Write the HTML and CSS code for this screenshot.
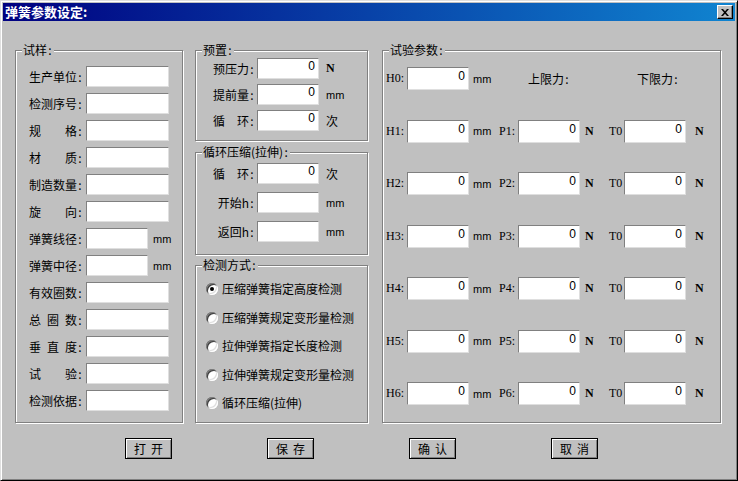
FILE: index.html
```html
<!DOCTYPE html>
<html>
<head>
<meta charset="utf-8">
<title>弹簧参数设定</title>
<link rel="stylesheet" href="styles.css">
</head>
<body>
<div class="window">
  <div class="titlebar">
    <span class="title">弹簧参数设定:</span>
    <div class="close"><svg width="8" height="7" viewBox="0 0 8 7"><path d="M0 0h2l2 2.2L6 0h2L5 3.5 8 7H6L4 4.8 2 7H0l3-3.5z" fill="#000"/></svg></div>
  </div>
  <div class="main">
    <div class="group g-sample">
      <div class="gtitle">试样<span class="c">:</span></div>
      <div class="row"><div class="lbl"><span>生产单位<span class="c">:</span></span></div><div class="box w83"></div></div>
      <div class="row"><div class="lbl"><span>检测序号<span class="c">:</span></span></div><div class="box w83"></div></div>
      <div class="row"><div class="lbl"><span>规</span><span>格<span class="c">:</span></span></div><div class="box w83"></div></div>
      <div class="row"><div class="lbl"><span>材</span><span>质<span class="c">:</span></span></div><div class="box w83"></div></div>
      <div class="row"><div class="lbl"><span>制造数量<span class="c">:</span></span></div><div class="box w83"></div></div>
      <div class="row"><div class="lbl"><span>旋</span><span>向<span class="c">:</span></span></div><div class="box w83"></div></div>
      <div class="row"><div class="lbl"><span>弹簧线径<span class="c">:</span></span></div><div class="box w62"></div><span class="mm unit-l">mm</span></div>
      <div class="row"><div class="lbl"><span>弹簧中径<span class="c">:</span></span></div><div class="box w62"></div><span class="mm unit-l">mm</span></div>
      <div class="row"><div class="lbl"><span>有效圈数<span class="c">:</span></span></div><div class="box w83"></div></div>
      <div class="row"><div class="lbl"><span>总</span><span>圈</span><span>数<span class="c">:</span></span></div><div class="box w83"></div></div>
      <div class="row"><div class="lbl"><span>垂</span><span>直</span><span>度<span class="c">:</span></span></div><div class="box w83"></div></div>
      <div class="row"><div class="lbl"><span>试</span><span>验<span class="c">:</span></span></div><div class="box w83"></div></div>
      <div class="row"><div class="lbl"><span>检测依据<span class="c">:</span></span></div><div class="box w83"></div></div>
    </div>

    <div class="col">
      <div class="group g-pre">
        <div class="gtitle">预置<span class="c">:</span></div>
        <div class="mrow"><div class="mlbl"><span>预压力<span class="c">:</span></span></div><div class="box w62">0</div><span class="lat unit-m nb">N</span></div>
        <div class="mrow"><div class="mlbl"><span>提前量<span class="c">:</span></span></div><div class="box w62">0</div><span class="mm unit-m">mm</span></div>
        <div class="mrow"><div class="mlbl"><span>循</span><span>环<span class="c">:</span></span></div><div class="box w62">0</div><span class="unit-m">次</span></div>
      </div>
      <div class="group g-cyc">
        <div class="gtitle">循环压缩(拉伸)<span class="c">:</span></div>
        <div class="mrow"><div class="mlbl"><span>循</span><span>环<span class="c">:</span></span></div><div class="box w62">0</div><span class="unit-m">次</span></div>
        <div class="mrow"><div class="mlbl end"><span>开始h<span class="c">:</span></span></div><div class="box w62"></div><span class="mm unit-m">mm</span></div>
        <div class="mrow"><div class="mlbl end"><span>返回h<span class="c">:</span></span></div><div class="box w62"></div><span class="mm unit-m">mm</span></div>
      </div>
      <div class="group g-det">
        <div class="gtitle">检测方式<span class="c">:</span></div>
        <div class="rrow"><span class="radio on"></span><span>压缩弹簧指定高度检测</span></div>
        <div class="rrow"><span class="radio"></span><span>压缩弹簧规定变形量检测</span></div>
        <div class="rrow"><span class="radio"></span><span>拉伸弹簧指定长度检测</span></div>
        <div class="rrow"><span class="radio"></span><span>拉伸弹簧规定变形量检测</span></div>
        <div class="rrow"><span class="radio"></span><span>循环压缩(拉伸)</span></div>
      </div>
    </div>

    <div class="group g-test">
      <div class="gtitle">试验参数<span class="c">:</span></div>
      <div class="trow"><span class="lat hl">H0:</span><div class="box tb">0</div><span class="mm u1">mm</span><span class="lim">上限力<span class="c">:</span></span><span>下限力<span class="c">:</span></span></div>
      <div class="trow"><span class="lat hl">H1:</span><div class="box tb">0</div><span class="mm u1">mm</span><span class="lat pl">P1:</span><div class="box tb">0</div><span class="lat u2 nb">N</span><span class="lat tl">T0</span><div class="box tb">0</div><span class="lat u3 nb">N</span></div>
      <div class="trow"><span class="lat hl">H2:</span><div class="box tb">0</div><span class="mm u1">mm</span><span class="lat pl">P2:</span><div class="box tb">0</div><span class="lat u2 nb">N</span><span class="lat tl">T0</span><div class="box tb">0</div><span class="lat u3 nb">N</span></div>
      <div class="trow"><span class="lat hl">H3:</span><div class="box tb">0</div><span class="mm u1">mm</span><span class="lat pl">P3:</span><div class="box tb">0</div><span class="lat u2 nb">N</span><span class="lat tl">T0</span><div class="box tb">0</div><span class="lat u3 nb">N</span></div>
      <div class="trow"><span class="lat hl">H4:</span><div class="box tb">0</div><span class="mm u1">mm</span><span class="lat pl">P4:</span><div class="box tb">0</div><span class="lat u2 nb">N</span><span class="lat tl">T0</span><div class="box tb">0</div><span class="lat u3 nb">N</span></div>
      <div class="trow"><span class="lat hl">H5:</span><div class="box tb">0</div><span class="mm u1">mm</span><span class="lat pl">P5:</span><div class="box tb">0</div><span class="lat u2 nb">N</span><span class="lat tl">T0</span><div class="box tb">0</div><span class="lat u3 nb">N</span></div>
      <div class="trow"><span class="lat hl">H6:</span><div class="box tb">0</div><span class="mm u1">mm</span><span class="lat pl">P6:</span><div class="box tb">0</div><span class="lat u2 nb">N</span><span class="lat tl">T0</span><div class="box tb">0</div><span class="lat u3 nb">N</span></div>
    </div>
  </div>

  <div class="buttons">
    <div class="btn"><span>打</span><span>开</span></div>
    <div class="btn"><span>保</span><span>存</span></div>
    <div class="btn"><span>确</span><span>认</span></div>
    <div class="btn"><span>取</span><span>消</span></div>
  </div>
</div>
</body>
</html>
```
FILE: styles.css
```css
body {
  margin: 0;
  background: #c0c0c0;
  font-family: "Noto Sans CJK SC", "Noto Sans CJK JP", sans-serif;
  font-size: 12px;
  color: #000;
}

.window {
  width: 738px;
  height: 481px;
  box-sizing: border-box;
  border: 1px solid;
  border-color: #dfdfdf #000 #000 #dfdfdf;
  box-shadow: inset 1px 1px 0 #fff, inset -1px -1px 0 #808080;
  padding: 2px;
  background: #c0c0c0;
}

.titlebar {
  height: 18px;
  background: linear-gradient(to right, #000080, #1084d0);
  display: flex;
  align-items: center;
  justify-content: space-between;
  padding: 0 2px;
}

.title {
  color: #fff;
  font-weight: bold;
  font-size: 13px;
  line-height: 18px;
}

.close {
  width: 16px;
  height: 14px;
  box-sizing: border-box;
  background: #c0c0c0;
  border: 1px solid;
  border-color: #fff #000 #000 #fff;
  box-shadow: inset -1px -1px 0 #808080;
  display: flex;
  align-items: center;
  justify-content: center;
}

.c {
  display: inline-block;
  width: 6px;
  text-align: center;
}

.main {
  display: flex;
  margin-top: 29px;
  padding-left: 12px;
}

.group {
  position: relative;
  box-sizing: border-box;
  border: 1px solid #808080;
  box-shadow: inset 1px 1px 0 #fff, 1px 1px 0 #fff;
  display: flex;
  flex-direction: column;
}

.gtitle {
  position: absolute;
  top: -8px;
  left: 6px;
  padding: 0 1px;
  background: #c0c0c0;
  line-height: 14px;
}

.box {
  box-sizing: border-box;
  background: #fff;
  border: 1px solid;
  border-color: #808080 #dfdfdf #dfdfdf #808080;
  height: 21px;
  font-family: "Liberation Sans", sans-serif;
  font-size: 12px;
  line-height: 12px;
  text-align: right;
  padding: 1px 3px 0 0;
}

.w83 { width: 83px; }
.w62 { width: 62px; }

.lat {
  font-family: "Liberation Serif", serif;
  font-size: 12px;
}

.mm {
  font-family: "Liberation Sans", sans-serif;
  font-size: 11px;
}

.nb { font-weight: bold; }

/* 试样 */
.g-sample {
  width: 168px;
  height: 373px;
  padding: 15px 0 0 13px;
  gap: 6px;
}

.row {
  display: flex;
  align-items: center;
  height: 21px;
}

.lbl {
  width: 54px;
  margin-right: 3px;
  display: flex;
  justify-content: space-between;
  line-height: 14px;
}

.unit-l { margin-left: 5px; }

/* middle column */
.col {
  display: flex;
  flex-direction: column;
  width: 173px;
  margin-left: 12px;
}

.col .group { width: 173px; }

.g-pre {
  height: 91px;
  padding: 7px 0 0 17px;
  gap: 5px;
}

.g-cyc {
  height: 103px;
  margin-top: 11px;
  padding: 10px 0 0 17px;
  gap: 8px;
}

.g-det {
  height: 158px;
  margin-top: 10px;
  padding: 15px 0 0 10px;
  gap: 12.5px;
}

.mrow {
  display: flex;
  align-items: center;
  height: 21px;
}

.mlbl {
  width: 42px;
  margin-right: 2px;
  display: flex;
  justify-content: space-between;
  line-height: 14px;
}

.mlbl.end { justify-content: flex-end; }

.unit-m { margin-left: 7px; }

.rrow {
  display: flex;
  align-items: center;
  height: 16px;
  gap: 4px;
  line-height: 14px;
}

.radio {
  position: relative;
  width: 12px;
  height: 12px;
  border-radius: 50%;
  background: #fff;
  box-shadow: inset 1px 1px 0 #808080, inset -1px -1px 0 #fff, inset 2px 2px 0 #404040, inset -2px -2px 0 #dfdfdf;
}

.radio.on::after {
  content: "";
  position: absolute;
  left: 4px;
  top: 4px;
  width: 4px;
  height: 4px;
  border-radius: 50%;
  background: #000;
}

/* 试验参数 */
.g-test {
  width: 339px;
  height: 373px;
  margin-left: 14px;
  padding: 16px 0 0 3px;
  gap: 29.5px;
}

.trow {
  display: flex;
  align-items: center;
  height: 23px;
}

.tb {
  width: 62px;
  height: 23px;
  padding-top: 2px;
}

.hl { width: 21px; }
.u1 { width: 26px; margin-left: 4px; }
.pl { width: 19px; }
.u2 { width: 24px; margin-left: 5px; }
.tl { width: 15px; }
.u3 { margin-left: 9px; }
.lim { width: 109px; margin-left: 29px; }

/* buttons */
.buttons {
  display: flex;
  margin-top: 15px;
  padding-left: 122px;
  gap: 95px;
}

.btn {
  width: 47px;
  height: 21px;
  box-sizing: border-box;
  border: 1px solid #000;
  box-shadow: inset 1px 1px 0 #fff, inset -1px -1px 0 #808080;
  background: #c0c0c0;
  display: flex;
  align-items: center;
  justify-content: center;
  gap: 5px;
  line-height: 14px;
}
```
